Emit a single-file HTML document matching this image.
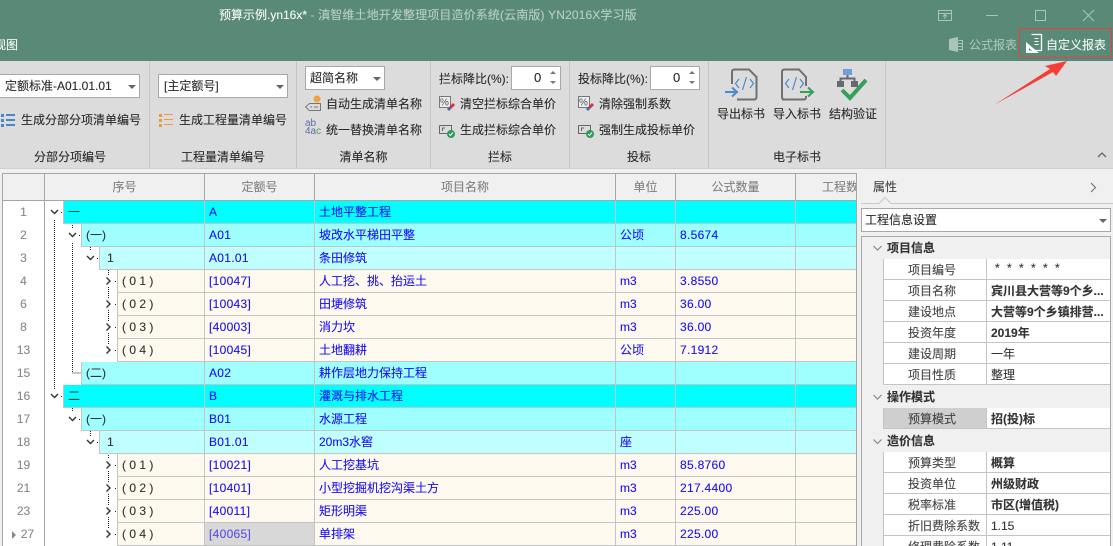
<!DOCTYPE html>
<html><head><meta charset="utf-8"><style>
html{margin:0;padding:0;overflow:hidden;width:1113px;height:546px}
body{margin:0;padding:0;position:relative;width:1113px;height:546px;overflow:hidden;background:#f0f0f0;font:12px/16px "Liberation Sans","Noto Sans CJK SC",sans-serif;color:#2a2a2a;-webkit-text-stroke:.12px}
div,span,svg{position:absolute;box-sizing:border-box}
.t{white-space:pre;height:16px}
.cb{background:#fff;border:1px solid #a8a8a8}
.car{width:0;height:0;border:4px solid transparent;border-top:4px solid #666;border-bottom:0}
.sep{top:61px;width:1px;height:107px;background:#c6c6c6}
.gl{top:149px;text-align:center}
.h{top:174px;height:26px;line-height:26px;text-align:center;color:#808080;background:#f0f0f0;border-right:1px solid #a6a6a6;overflow:hidden;white-space:nowrap}
.r{left:3px;width:853px;height:23px;background:#fff;line-height:22px;color:#1a10f0}
.r span{top:0;height:23px;border-right:1px solid #c4c4c4;border-bottom:1px solid #c4c4c4;padding-left:4px;white-space:pre;overflow:hidden}
.r .n{left:0;width:42px;text-align:center;padding:0;color:#888;background:#fff;border-bottom:0;border-right:1px solid #a6a6a6}
.r .s{color:#333;padding-left:4px;border-left:1px solid #c4c4c4}
.r .d{left:202px;width:110px;letter-spacing:.3px}
.r .m{left:312px;width:301px}
.r .u{left:613px;width:60px}
.r .q{left:673px;width:120px;letter-spacing:.3px}
.r .l{left:793px;width:60px;border-right:0}
.c1 span{background:#0ff}.c2 span{background:#9fffff}.c3 span{background:#c0ffff}.c4 span{background:#fef9ef}
.r span.n{background:#fff}
.pl{left:883px;width:104px;height:21px;border-right:1px solid #c4c4c4;border-bottom:1px solid #c4c4c4;border-left:1px solid #c4c4c4;padding-left:24px;line-height:23px;background:#fff;white-space:pre;color:#444}
.pv{left:987px;width:123px;height:21px;border-bottom:1px solid #c4c4c4;padding-left:4px;line-height:22px;background:#fff;white-space:pre;overflow:hidden;color:#333}
.b{font-weight:bold}
.ps{left:862px;width:248px;height:22px;background:#f0f0f0;font-weight:bold;padding-left:25px;line-height:23px;color:#333}
</style></head><body>

<div style="left:0;top:0;width:1113px;height:61px;background:#598a78"></div>
<div class="t" style="left:219px;top:7px;color:#f4f8f6">预算示例.yn16x*<span style="position:static;color:#b7cfc6;letter-spacing:.13px"> - 滇智维土地开发整理项目造价系统(云南版) YN2016X学习版</span></div>
<div class="t" style="left:-6px;top:37px;color:#f4f8f6">视图</div>

<svg style="left:930px;top:0" width="183" height="61" fill="none" stroke="#a9c5ba">
<path d="M8.500 10.500H21.500V20.500H8.500ZM8.500 13.500H21.500M15 19V15M13 16.500L15 14.500L17 16.500"/>
<path d="M56 15.500H68"/>
<path d="M105.500 10.500H115.500V20.500H105.500Z"/>
<path d="M153 10L164 21M164 10L153 21"/>
<path d="M19 39L28 37V52L19 50Z" fill="#a9c5ba" stroke="none"/>
<path d="M28.500 40.500H32.500V49.500H28.500M28 43.500H32M28 46.500H32" stroke-width="1"/>
<path d="M101.500 34.500H111.500V50.500H104" stroke="#fff" stroke-width="1.300"/>
<path d="M104.500 38.500H108.500M104.500 41.500H108.500M104.500 44.500H108.500" stroke="#fff"/>
<path d="M96 42V53H109Z" fill="#fff" stroke="none"/>
<path d="M99 48V50.500H102Z" fill="#598a78" stroke="none"/>
</svg>
<div class="t" style="left:969px;top:37px;color:#aac6bb">公式报表</div>
<div class="t" style="left:1046px;top:37px;color:#f4f8f6">自定义报表</div>

<div style="left:0;top:61px;width:1113px;height:107px;background:#dcdcdc"></div>
<div style="left:0;top:168px;width:1113px;height:1px;background:#cfcfcf"></div>
<div class="sep" style="left:149px"></div>
<div class="sep" style="left:296px"></div>
<div class="sep" style="left:430px"></div>
<div class="sep" style="left:569px"></div>
<div class="sep" style="left:708px"></div>
<div class="sep" style="left:885px"></div>

<div style="left:1019px;top:28px;width:93px;height:30px;border:1px solid #e8403c"></div>
<svg style="left:985px;top:55px" width="90" height="55"><path d="M9 50L65 14L60 11L82 6L71 21L68 17Z" fill="#f63c36"/></svg>

<div class="cb" style="left:-1px;top:74px;width:141px;height:24px"></div>
<div class="t" style="left:5px;top:78px">定额标准-A01.01.01</div>
<div class="car" style="left:128px;top:85px"></div>
<div class="cb" style="left:158px;top:74px;width:130px;height:24px"></div>
<div class="t" style="left:164px;top:78px">[主定额号]</div>
<div class="car" style="left:276px;top:85px"></div>
<svg style="left:0;top:112px" width="16" height="16" fill="#4a86c8"><rect x="1" y="2" width="3" height="3"/><rect x="1" y="7" width="3" height="3"/><rect x="1" y="12" width="3" height="3"/><rect x="6" y="2" width="9" height="2"/><rect x="6" y="7" width="9" height="2"/><rect x="6" y="12" width="9" height="2"/></svg>
<div class="t" style="left:21px;top:112px">生成分部分项清单编号</div>
<svg style="left:158px;top:112px" width="16" height="16" fill="#ec9a3f"><rect x="1" y="2" width="3" height="3"/><rect x="1" y="7" width="3" height="3"/><rect x="1" y="12" width="3" height="3"/><rect x="6" y="2" width="9" height="1"/><rect x="6" y="7" width="9" height="1"/><rect x="6" y="12" width="9" height="1"/></svg>
<div class="t" style="left:179px;top:112px">生成工程量清单编号</div>
<div class="t gl" style="left:0;width:140px">分部分项编号</div>
<div class="t gl" style="left:150px;width:146px">工程量清单编号</div>
<div class="t gl" style="left:297px;width:133px">清单名称</div>
<div class="t gl" style="left:431px;width:138px">拦标</div>
<div class="t gl" style="left:570px;width:138px">投标</div>
<div class="t gl" style="left:709px;width:176px">电子标书</div>

<div class="cb" style="left:305px;top:66px;width:80px;height:24px"></div>
<div class="t" style="left:310px;top:70px">超简名称</div>
<div class="car" style="left:373px;top:77px"></div>
<svg style="left:304px;top:94px" width="20" height="18"><circle cx="13" cy="5" r="3.500" fill="#f2a23c"/><path d="M5.500 9.500H16.500V16.500H5.500L1.500 13Z" fill="none" stroke="#777"/><path d="M6 13H8M10 13H14" stroke="#777"/></svg>
<div class="t" style="left:326px;top:96px">自动生成清单名称</div>
<div class="t" style="left:305px;top:120px;font-size:10px;line-height:8px;color:#5a6f9c;height:18px;-webkit-text-stroke:0">ab<br>4a<span style="position:static;color:#4d9d63">c</span></div>
<div class="t" style="left:326px;top:122px">统一替换清单名称</div>

<div class="t" style="left:439px;top:71px">拦标降比(%):</div>
<div class="cb" style="left:511px;top:66px;width:50px;height:24px"></div>
<div class="t" style="left:534px;top:70px;font-size:13px">0</div>
<svg style="left:548px;top:69px" width="10" height="18" fill="#777"><path d="M2 5L5 2L8 5Z"/><path d="M2 12L5 15L8 12Z"/></svg>
<div class="t" style="left:578px;top:71px">投标降比(%):</div>
<div class="cb" style="left:650px;top:66px;width:50px;height:24px"></div>
<div class="t" style="left:673px;top:70px;font-size:13px">0</div>
<svg style="left:687px;top:69px" width="10" height="18" fill="#777"><path d="M2 5L5 2L8 5Z"/><path d="M2 12L5 15L8 12Z"/></svg>

<svg style="left:438px;top:95px" width="20" height="18"><rect x="1.500" y="1.500" width="11" height="11" fill="#eee" stroke="#777"/><text x="2" y="10.500" font-size="10" fill="#555" font-family="Liberation Sans">%</text><path d="M12 13L16 9" stroke="#d8343c" stroke-width="3"/><path d="M10 15L12 13" stroke="#3b6cc8" stroke-width="3"/></svg>
<div class="t" style="left:460px;top:96px">清空拦标综合单价</div>
<svg style="left:438px;top:121px" width="20" height="18" fill="none"><path d="M1.500 4.500H13.500V12M9 12.500H1.500V4.500" stroke="#666"/><path d="M4.500 10V7H7" stroke="#666"/><circle cx="13" cy="13" r="4" fill="#2f9a57"/><path d="M11 13L12.500 14.500L15 11.500" stroke="#fff"/></svg>
<div class="t" style="left:460px;top:122px">生成拦标综合单价</div>
<svg style="left:577px;top:95px" width="20" height="18"><rect x="1.500" y="1.500" width="11" height="11" fill="#eee" stroke="#777"/><text x="2" y="10.500" font-size="10" fill="#555" font-family="Liberation Sans">%</text><path d="M12 13L16 9" stroke="#d8343c" stroke-width="3"/><path d="M10 15L12 13" stroke="#3b6cc8" stroke-width="3"/></svg>
<div class="t" style="left:599px;top:96px">清除强制系数</div>
<svg style="left:577px;top:121px" width="20" height="18" fill="none"><path d="M1.500 4.500H13.500V12M9 12.500H1.500V4.500" stroke="#666"/><path d="M4.500 10V7H7" stroke="#666"/><circle cx="13" cy="13" r="4" fill="#2f9a57"/><path d="M11 13L12.500 14.500L15 11.500" stroke="#fff"/></svg>
<div class="t" style="left:599px;top:122px">强制生成投标单价</div>

<svg style="left:720px;top:66px" width="160" height="38" fill="none">
<path d="M12 18V6Q12 3.500 14.500 3.500H29L36.500 11V31Q36.500 33.500 34 33.500H17" stroke="#6f7076" stroke-width="2"/>
<path d="M19 13L15.500 17.500L19 22M30 13L33.500 17.500L30 22M26.500 11L22.500 24" stroke="#4a8ad0" stroke-width="1.200"/>
<path d="M5 26H16M12 21.500L17 26L12 30.500" stroke="#4a8ad0" stroke-width="2"/>
<path d="M62 33.500H64.500Q62 33.500 62 31V6Q62 3.500 64.500 3.500H79L86 11V20M86 30V31Q86 33.500 84 33.500H64" stroke="#6f7076" stroke-width="2"/>
<path d="M69 13L65.500 17.500L69 22M80 13L83.500 17.500L80 22M76.500 11L72.500 24" stroke="#4a8ad0" stroke-width="1.200"/>
<path d="M80 26H92M88 21.500L93 26L88 30.500" stroke="#35a05a" stroke-width="2"/>
<rect x="123" y="3" width="9" height="6" fill="#6f9fd6"/>
<rect x="117" y="15" width="7" height="6" fill="#666a70"/><rect x="131" y="15" width="7" height="6" fill="#666a70"/>
<path d="M127.500 9V12.500M120.500 15V12.500H134.500V15" stroke="#666a70" stroke-width="2"/>
<path d="M122 24L130 32L146 14" stroke="#35a05a" stroke-width="4"/>
</svg>
<div class="t" style="left:717px;top:106px">导出标书</div>
<div class="t" style="left:773px;top:106px">导入标书</div>
<div class="t" style="left:829px;top:106px">结构验证</div>
<svg style="left:1096px;top:150px" width="12" height="10" fill="none"><path d="M2 7L6 3L10 7" stroke="#666" stroke-width="1.300"/></svg>

<div style="left:2px;top:173px;width:855px;height:373px;border:1px solid #a6a6a6;border-bottom:0;background:#fff"></div>
<div class="h" style="left:3px;width:42px"></div>
<div class="h" style="left:45px;width:160px">序号</div>
<div class="h" style="left:205px;width:110px">定额号</div>
<div class="h" style="left:315px;width:301px">项目名称</div>
<div class="h" style="left:616px;width:60px">单位</div>
<div class="h" style="left:676px;width:120px">公式数量</div>
<div class="h" style="left:796px;width:60px;border-right:0;padding-left:60px;text-align:left"><span style="left:26px;top:0">工程数量</span></div>
<div style="left:3px;top:200px;width:853px;height:1px;background:#a6a6a6"></div>

<div class="r c1" style="top:201px"><span class="n">1</span><span class="s" style="left:60px;width:142px">一</span><span class="d">A</span><span class="m">土地平整工程</span><span class="u"></span><span class="q"></span><span class="l"></span></div>
<div class="r c2" style="top:224px"><span class="n">2</span><span class="s" style="left:78px;width:124px">(一)</span><span class="d">A01</span><span class="m">坡改水平梯田平整</span><span class="u">公顷</span><span class="q">8.5674</span><span class="l"></span></div>
<div class="r c3" style="top:247px"><span class="n">3</span><span class="s" style="left:96px;width:106px;padding-left:7px">1</span><span class="d">A01.01</span><span class="m">条田修筑</span><span class="u"></span><span class="q"></span><span class="l"></span></div>
<div class="r c4" style="top:270px"><span class="n">4</span><span class="s" style="left:114px;width:88px">( 0 1 )</span><span class="d">[10047]</span><span class="m">人工挖、挑、抬运土</span><span class="u">m3</span><span class="q">3.8550</span><span class="l"></span></div>
<div class="r c4" style="top:293px"><span class="n">6</span><span class="s" style="left:114px;width:88px">( 0 2 )</span><span class="d">[10043]</span><span class="m">田埂修筑</span><span class="u">m3</span><span class="q">36.00</span><span class="l"></span></div>
<div class="r c4" style="top:316px"><span class="n">8</span><span class="s" style="left:114px;width:88px">( 0 3 )</span><span class="d">[40003]</span><span class="m">消力坎</span><span class="u">m3</span><span class="q">36.00</span><span class="l"></span></div>
<div class="r c4" style="top:339px"><span class="n">13</span><span class="s" style="left:114px;width:88px">( 0 4 )</span><span class="d">[10045]</span><span class="m">土地翻耕</span><span class="u">公顷</span><span class="q">7.1912</span><span class="l"></span></div>
<div class="r c2" style="top:362px"><span class="n">15</span><span class="s" style="left:78px;width:124px">(二)</span><span class="d">A02</span><span class="m">耕作层地力保持工程</span><span class="u"></span><span class="q"></span><span class="l"></span></div>
<div class="r c1" style="top:385px"><span class="n">16</span><span class="s" style="left:60px;width:142px">二</span><span class="d">B</span><span class="m">灌溉与排水工程</span><span class="u"></span><span class="q"></span><span class="l"></span></div>
<div class="r c2" style="top:408px"><span class="n">17</span><span class="s" style="left:78px;width:124px">(一)</span><span class="d">B01</span><span class="m">水源工程</span><span class="u"></span><span class="q"></span><span class="l"></span></div>
<div class="r c3" style="top:431px"><span class="n">18</span><span class="s" style="left:96px;width:106px;padding-left:7px">1</span><span class="d">B01.01</span><span class="m">20m3水窖</span><span class="u">座</span><span class="q"></span><span class="l"></span></div>
<div class="r c4" style="top:454px"><span class="n">19</span><span class="s" style="left:114px;width:88px">( 0 1 )</span><span class="d">[10021]</span><span class="m">人工挖基坑</span><span class="u">m3</span><span class="q">85.8760</span><span class="l"></span></div>
<div class="r c4" style="top:477px"><span class="n">21</span><span class="s" style="left:114px;width:88px">( 0 2 )</span><span class="d">[10401]</span><span class="m">小型挖掘机挖沟渠土方</span><span class="u">m3</span><span class="q">217.4400</span><span class="l"></span></div>
<div class="r c4" style="top:500px"><span class="n">23</span><span class="s" style="left:114px;width:88px">( 0 3 )</span><span class="d">[40011]</span><span class="m">矩形明渠</span><span class="u">m3</span><span class="q">225.00</span><span class="l"></span></div>
<div class="r c4" style="top:523px"><span class="n" style="padding-left:8px">27</span><span class="s" style="left:114px;width:88px">( 0 4 )</span><span class="d" style="background:#d8d8d8;color:#5a50e8">[40065]</span><span class="m">单排架</span><span class="u">m3</span><span class="q">225.00</span><span class="l"></span></div>

<svg style="left:0;top:0" width="118" height="546" fill="none">
<g stroke="#222" stroke-dasharray="1 1">
<path d="M54.500 220V389"/>
<path d="M72.500 225V229M72.500 243V373H81"/>
<path d="M90.500 247V251"/>
<path d="M108.500 270V275M108.500 287V298M108.500 310V321M108.500 333V344"/>
<path d="M72.500 408V412M90.500 431V436"/>
<path d="M108.500 455V459M108.500 471V482M108.500 494V505M108.500 517V528"/>
<path d="M61 212.500H63M79 235.500H81M97 258.500H99M115 281.500H117M115 304.500H117M115 327.500H117M115 350.500H117M61 396.500H63M79 419.500H81M97 442.500H99M115 465.500H117M115 488.500H117M115 511.500H117M115 534.500H117"/>
</g>
<g stroke="#333" stroke-width="1.400">
<path d="M51 210L54.500 213.500L58 210M69 233L72.500 236.500L76 233M87 256L90.500 259.500L94 256M51 394L54.500 397.500L58 394M69 417L72.500 420.500L76 417M87 440L90.500 443.500L94 440"/>
<path d="M106.500 277.500L110 281L106.500 284.500M106.500 300.500L110 304L106.500 307.500M106.500 323.500L110 327L106.500 330.500M106.500 346.500L110 350L106.500 353.500M106.500 461.500L110 465L106.500 468.500M106.500 484.500L110 488L106.500 491.500M106.500 507.500L110 511L106.500 514.500M106.500 530.500L110 534L106.500 537.500"/>
</g>
<path d="M12 531V539L16 535Z" fill="#888"/>
</svg>

<div class="t" style="left:873px;top:179px;color:#444">属性</div>
<svg style="left:1086px;top:180px" width="14" height="14" fill="none"><path d="M5 3L9.500 7.500L5 12" stroke="#777" stroke-width="1.200"/></svg>
<svg style="left:861px;top:196px" width="252" height="10" fill="none"><path d="M0 7.500H18L24 1.500L30 7.500H252" stroke="#c8c8c8"/></svg>
<div class="cb" style="left:861px;top:208px;width:250px;height:24px"></div>
<div class="t" style="left:865px;top:212px">工程信息设置</div>
<div class="car" style="left:1099px;top:219px"></div>

<div style="left:861px;top:236px;width:250px;height:310px;border:1px solid #a8a8a8;border-bottom:0;background:#f0f0f0"></div>
<div class="ps" style="top:237px">项目信息</div>
<div class="pl" style="top:259px">项目编号</div><div class="pv" style="top:259px;line-height:19px;letter-spacing:2px;padding-left:8px">* * * * * *</div>
<div class="pl" style="top:280px">项目名称</div><div class="pv b" style="top:280px">宾川县大营等9个乡...</div>
<div class="pl" style="top:301px">建设地点</div><div class="pv b" style="top:301px">大营等9个乡镇排营...</div>
<div class="pl" style="top:322px">投资年度</div><div class="pv b" style="top:322px">2019年</div>
<div class="pl" style="top:343px">建设周期</div><div class="pv" style="top:343px">一年</div>
<div class="pl" style="top:364px">项目性质</div><div class="pv" style="top:364px">整理</div>
<div class="ps" style="top:386px">操作模式</div>
<div class="pl" style="top:408px;background:#cfcfcf">预算模式</div><div class="pv b" style="top:408px">招(投)标</div>
<div class="ps" style="top:430px">造价信息</div>
<div class="pl" style="top:452px">预算类型</div><div class="pv b" style="top:452px">概算</div>
<div class="pl" style="top:473px">投资单位</div><div class="pv b" style="top:473px">州级财政</div>
<div class="pl" style="top:494px">税率标准</div><div class="pv b" style="top:494px">市区(增值税)</div>
<div class="pl" style="top:515px">折旧费除系数</div><div class="pv" style="top:515px">1.15</div>
<div class="pl" style="top:536px">修理费除系数</div><div class="pv" style="top:536px">1.11</div>
<svg style="left:872px;top:240px" width="12" height="210" fill="none" stroke="#888" stroke-width="1.200"><path d="M1.500 6L5.500 10L9.500 6M1.500 155L5.500 159L9.500 155M1.500 199.500L5.500 203.500L9.500 199.500"/></svg>
</body></html>
